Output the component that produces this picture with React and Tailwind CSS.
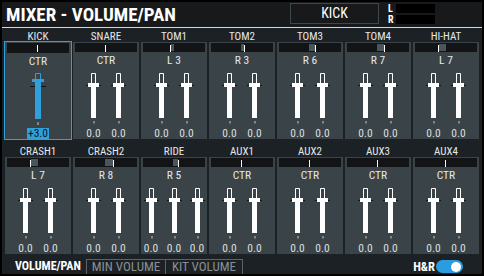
import React from "react";

const BLUE = "#2fa0dc";

const rows = [
  [
    { name: "KICK", pan: 0, values: ["+3.0"], selected: true },
    { name: "SNARE", pan: 0, values: ["0.0", "0.0"] },
    { name: "TOM1", pan: -3, values: ["0.0", "0.0"] },
    { name: "TOM2", pan: 3, values: ["0.0", "0.0"] },
    { name: "TOM3", pan: 6, values: ["0.0", "0.0"] },
    { name: "TOM4", pan: 7, values: ["0.0", "0.0"] },
    { name: "HI-HAT", pan: -7, values: ["0.0", "0.0"] },
  ],
  [
    { name: "CRASH1", pan: -7, values: ["0.0", "0.0"] },
    { name: "CRASH2", pan: 8, values: ["0.0", "0.0"] },
    { name: "RIDE", pan: 5, values: ["0.0", "0.0", "0.0"] },
    { name: "AUX1", pan: 0, values: ["0.0", "0.0"] },
    { name: "AUX2", pan: 0, values: ["0.0", "0.0"] },
    { name: "AUX3", pan: 0, values: ["0.0", "0.0"] },
    { name: "AUX4", pan: 0, values: ["0.0", "0.0"] },
  ],
];

function panText(pan) {
  if (pan === 0) return "CTR";
  return pan < 0 ? `L ${-pan}` : `R ${pan}`;
}

function PanBar({ pan }) {
  const c = 30;
  const tick = c + pan;
  return (
    <div className="relative mx-[2px] mt-[1px] h-[10px] bg-[#121416]">
      {pan !== 0 && (
        <div
          className="absolute top-[1px] bottom-[1px] bg-[#4b565c]"
          style={{ left: pan > 0 ? c : tick + 1, width: Math.abs(pan) }}
        />
      )}
      <div className="absolute top-[2px] h-[7px] w-px bg-white" style={{ left: tick }} />
    </div>
  );
}

function FaderSvg() {
  return (
    <svg width="15" height="54" viewBox="0 0 15 54" className="block">
      <rect x="0" y="14" width="15" height="1" fill="#111416" />
      <path d="M5.5 12V2.5H9.5V12" fill="none" stroke="#fff" strokeWidth="1" />
      <rect x="2" y="12" width="11" height="4" fill="#fff" />
      <rect x="5" y="16" width="5" height="31" fill="#fff" />
      <rect x="7" y="50" width="2" height="2.5" fill="#7f878b" />
    </svg>
  );
}

function SelectedFaderSvg() {
  return (
    <svg width="16" height="54" viewBox="0 0 16 54" className="block">
      <rect x="0" y="14" width="16" height="1" fill="#111416" />
      <path d="M5.5 7V1.5H10.5V7" fill="none" stroke={BLUE} strokeWidth="1" />
      <rect x="2" y="7" width="12" height="3" fill={BLUE} />
      <rect x="5" y="10" width="6" height="37" fill={BLUE} />
      <rect x="7" y="50" width="2" height="3" fill="#7f878b" />
    </svg>
  );
}

function Fader({ value, selected }) {
  if (selected) {
    return (
      <div className="flex w-[16px] flex-col items-center">
        <SelectedFaderSvg />
        <div className="mt-[2px] h-[11px] w-[22px] shrink-0 whitespace-nowrap bg-[#2fa0dc] text-center text-[11.5px] leading-[11px] text-[#0b1720]">
          {value}
        </div>
      </div>
    );
  }
  return (
    <div className="flex w-[15px] flex-col items-center">
      <FaderSvg />
      <div className="mt-[3px] whitespace-nowrap text-center text-[11.5px] leading-[11px] text-[#dadedf]">
        {value}
      </div>
    </div>
  );
}

function Channel({ ch }) {
  return (
    <div className="flex flex-col">
      <div className="h-[11px] whitespace-nowrap text-center text-[11px] leading-[11px] text-[#e6e8e9]">
        {ch.name}
      </div>
      <div
        className={
          "flex h-[97px] flex-col bg-[#3a4347] " + (ch.selected ? "ring-1 ring-[#2fa0dc]" : "")
        }
      >
        <PanBar pan={ch.pan} />
        <div className="mt-[3px] h-[11px] whitespace-nowrap text-center text-[11.5px] leading-[11px] text-[#e6e8e9]">
          {panText(ch.pan)}
        </div>
        <div
          className={
            "mt-[5px] flex justify-center " +
            (ch.values.length === 3 ? "gap-[8px]" : "gap-[10px]")
          }
        >
          {ch.values.map((v, i) => (
            <Fader key={i} value={v} selected={ch.selected} />
          ))}
        </div>
      </div>
    </div>
  );
}

export default function App() {
  return (
    <div className="h-[276px] w-[484px] overflow-hidden bg-black p-[2px] font-['Roboto_Condensed','Roboto',sans-serif] text-white">
      <div className="flex h-full flex-col bg-[#1c2125]">
        {/* header */}
        <div className="flex h-[26px] shrink-0 items-start border-b border-[#d8d8d8] bg-[#17191b]">
          <div className="ml-[4px] whitespace-nowrap text-[19px] font-bold leading-[25px]">
            MIXER - VOLUME/PAN
          </div>
          <div className="ml-auto mt-[1px] flex h-[21px] w-[89px] items-center justify-center border border-[#3b494e] text-[14px]">
            KICK
          </div>
          <div className="ml-[9px] mr-[47px] mt-[2px] flex flex-col gap-[2px]">
            <div className="flex h-[9px] items-center">
              <span className="w-[8px] text-[10px] font-bold leading-[9px]">L</span>
              <div className="h-[9px] w-[39px] bg-black" />
            </div>
            <div className="flex h-[9px] items-center">
              <span className="w-[8px] text-[10px] font-bold leading-[9px]">R</span>
              <div className="h-[9px] w-[39px] bg-black" />
            </div>
          </div>
        </div>

        {/* channels */}
        <div className="mt-[3px] grid grid-cols-7 gap-x-[2px] px-[3px]">
          {rows[0].map((ch) => (
            <Channel key={ch.name} ch={ch} />
          ))}
        </div>
        <div className="mt-[7px] grid grid-cols-7 gap-x-[2px] px-[3px]">
          {rows[1].map((ch) => (
            <Channel key={ch.name} ch={ch} />
          ))}
        </div>

        {/* footer */}
        <div className="flex h-[20px] shrink-0 items-end">
          <div className="ml-[13px] h-[15px] w-[71px] whitespace-nowrap text-[12px] font-bold leading-[15px]">
            VOLUME/PAN
          </div>
          <div className="flex h-[15px] whitespace-nowrap text-[13px] leading-[14px] text-[#899095]">
            <div className="w-[79px] border-l border-t border-[#5b6469] text-center">MIN VOLUME</div>
            <div className="w-[78px] border-x border-t border-[#5b6469] text-center">KIT VOLUME</div>
          </div>
          <div className="ml-auto mr-[19px] flex h-[15px] items-center">
            <span className="whitespace-nowrap text-[12.5px] font-bold leading-[15px]">H&amp;R</span>
            <div className="ml-[1px] flex h-[13px] w-[27px] items-center justify-end rounded-full bg-[#2b9ce0] pr-[2px]">
              <div className="h-[10px] w-[10px] rounded-full bg-white" />
            </div>
          </div>
        </div>
      </div>
    </div>
  );
}
